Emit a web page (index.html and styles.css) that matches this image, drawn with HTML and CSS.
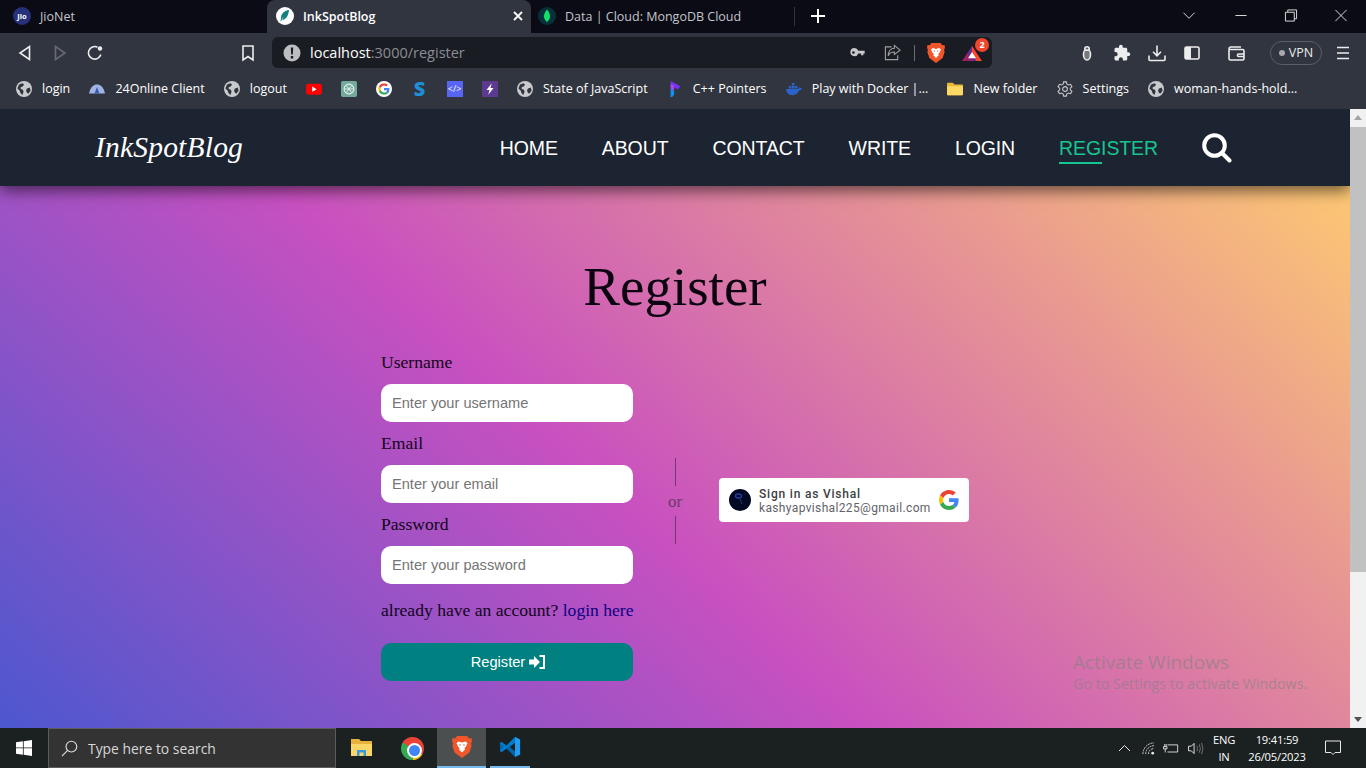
FILE: index.html
```html
<!DOCTYPE html>
<html>
<head>
    <title>InkSpotBlog</title>
    <link rel="stylesheet" href="styles.css">
</head>
<body>
    <svg class="defs">
        <symbol id="globe" viewBox="0 0 16 16">
            <circle cx="8" cy="8" r="8" fill="#c9cacd"/>
            <path fill="#31353f" d="M3 3.500 6.500 2.200 8 3.500 6.800 5.600 4.800 6 4.600 8 6.600 8.600 7.600 10.500 6.400 14 4.600 12.200 3.600 9.600 1.400 7.600ZM11 7.600 13.800 6.600 14.600 9.600 12.600 12.600 11 12 10 9.600Z"/>
        </symbol>
        <symbol id="google-g" viewBox="0 0 48 48">
            <path fill="#EA4335" d="M24 9.5c3.54 0 6.71 1.22 9.21 3.6l6.85-6.85C35.9 2.38 30.47 0 24 0 14.62 0 6.51 5.38 2.56 13.22l7.98 6.19C12.43 13.72 17.74 9.5 24 9.5z"/>
            <path fill="#4285F4" d="M46.98 24.55c0-1.57-.15-3.09-.38-4.55H24v9.02h12.94c-.58 2.96-2.26 5.48-4.78 7.18l7.73 6c4.51-4.18 7.09-10.36 7.09-17.65z"/>
            <path fill="#FBBC05" d="M10.53 28.59c-.48-1.45-.76-2.99-.76-4.59s.27-3.14.76-4.59l-7.98-6.19C.92 16.46 0 20.12 0 24c0 3.88.92 7.54 2.56 10.78l7.97-6.19z"/>
            <path fill="#34A853" d="M24 48c6.48 0 11.93-2.13 15.89-5.81l-7.73-6c-2.15 1.45-4.92 2.3-8.16 2.3-6.26 0-11.57-4.22-13.47-9.91l-7.98 6.19C6.51 42.62 14.62 48 24 48z"/>
        </symbol>
        <symbol id="brave" viewBox="0 0 20 22">
            <path fill="#f1562b" d="M5 0h10l2 2.400 2.400-.4.6 3-1 2.600.6 2.400-2.200 6.600L10 22l-7.400-5.400L.4 10 1 7.600 0 5l.6-3L3 2.400Z"/>
            <path fill="#fff" d="M6.500 5.500 10 6.500l3.500-1 2 1.500-1.500 3.500-1.500 1.500.5 1.500L10 16.500 7 13.500l.5-1.500L6 10.500 4.500 7Z"/>
            <path fill="#f1562b" d="M7 8.500h2.200L8 10ZM13 8.500h-2.200L12 10Z"/>
        </symbol>
    </svg>

    <div class="tab-strip">
        <div class="tab tab-first">
            <span class="fav-jio">Jio</span>
            <span class="tab-title">JioNet</span>
        </div>
        <div class="tab tab-active">
            <svg class="fav" viewBox="0 0 18 18">
                <circle cx="9" cy="9" r="9" fill="#fff"/>
                <path fill="#12807f" d="M13 3C8 3.500 5 7 5 11l-.5 3.500 1-.8C6 12 6.500 11 7.500 9.500 7 11 6.500 12 6.300 13 10 12.500 12.500 8.500 13 3Z"/>
            </svg>
            <span class="tab-title">InkSpotBlog</span>
            <svg class="tab-close" viewBox="0 0 10 10"><path d="M1 1 9 9M9 1 1 9"/></svg>
        </div>
        <div class="tab tab-last">
            <svg class="fav" viewBox="0 0 18 18">
                <circle cx="9" cy="9" r="9" fill="#06303a"/>
                <path fill="#13e069" d="M9 2.500C11.500 5.500 12 7.500 12 9.500 12 12 10.500 13.500 9.300 14.500L9 16 8.700 14.500C7.500 13.500 6 12 6 9.500 6 7.500 6.500 5.500 9 2.500Z"/>
            </svg>
            <span class="tab-title">Data | Cloud: MongoDB Cloud</span>
        </div>
        <svg class="new-tab" viewBox="0 0 14 14"><path d="M7 0V14M0 7H14"/></svg>
        <div class="window-controls">
            <svg viewBox="0 0 14 14"><path d="M1 4 7 10 13 4"/></svg>
            <svg viewBox="0 0 14 14"><path d="M1 7H13"/></svg>
            <svg viewBox="0 0 14 14"><path d="M3.500 3V1H13V10.500H10.500M1 3.500H10.500V13H1Z"/></svg>
            <svg viewBox="0 0 14 14"><path d="M1 1 13 13M13 1 1 13"/></svg>
        </div>
    </div>

    <div class="toolbar">
        <div class="tool-btn">
            <svg viewBox="0 0 18 18"><path d="M13.500 2.500V15.500L4 9Z"/></svg>
        </div>
        <div class="tool-btn tool-off">
            <svg viewBox="0 0 18 18"><path d="M4.500 2.500V15.500L14 9Z"/></svg>
        </div>
        <div class="tool-btn">
            <svg viewBox="0 0 18 18"><path d="M14.800 10.500A6.300 6.300 0 1 1 11.500 3.200"/><circle class="solid" cx="14" cy="4.500" r="2.200"/></svg>
        </div>
        <div class="tool-btn bookmark-btn">
            <svg viewBox="0 0 18 18"><path d="M4 2H14V16L9 12.500 4 16Z"/></svg>
        </div>
        <div class="url-pill">
            <svg class="url-info" viewBox="0 0 18 18">
                <circle cx="9" cy="9" r="8.500" fill="#bdbec2"/>
                <path fill="#1a1c23" d="M7.800 3.500h2.400L9.800 10.500H8.200ZM7.800 12h2.400v2.400H7.800Z"/>
            </svg>
            <span class="url-text">localhost<span class="url-dim">:3000/register</span></span>
            <div class="url-icons">
                <svg class="key-icon" viewBox="0 0 16 10">
                    <path fill="#c8c9cc" fill-rule="evenodd" d="M4.500 0A4.500 4.500 0 0 1 8.800 3H16V6H14.500V8H12V6H8.800A4.500 4.500 0 1 1 4.500 0ZM3.500 3.500A1.500 1.500 0 1 0 3.500 6.500 1.500 1.500 0 0 0 3.500 3.500Z"/>
                </svg>
                <svg class="share-icon" viewBox="0 0 18 18">
                    <path d="M8 3H1.500V16.500H14.500V12M11 1.500 17 6.500 11 11V8.500C7.500 8.500 5.500 10 4.500 12.500 4.500 8 7 4.500 11 4.500Z"/>
                </svg>
                <span class="url-sep"></span>
                <svg class="brave-icon"><use href="#brave"/></svg>
                <div class="bat-wrap">
                    <svg class="bat-icon" viewBox="0 0 22 18">
                        <path fill="#662d91" d="M11 1 22 18H0Z"/>
                        <path fill="#ff4724" d="M11 1 22 18H16L11 9Z"/>
                        <path fill="#9e1f63" d="M0 18 6 9 11 18Z"/>
                        <path fill="#fff" d="M11 8 15.500 15H6.500Z"/>
                    </svg>
                    <span class="bat-badge">2</span>
                </div>
            </div>
        </div>
        <div class="tool-btn bug-btn">
            <svg viewBox="0 0 18 18">
                <ellipse cx="9" cy="10.500" rx="3.500" ry="5.500" fill="#77787c"/>
                <ellipse cx="9" cy="4.500" rx="2.200" ry="1.800" fill="#5d5e63"/>
            </svg>
        </div>
        <div class="tool-btn">
            <svg class="fill-icon" viewBox="0 0 24 24"><path d="M20.500 11H19V7c0-1.100-.9-2-2-2h-4V3.500C13 2.120 11.880 1 10.500 1S8 2.120 8 3.500V5H4c-1.100 0-1.990.9-1.990 2v3.800H3.500c1.490 0 2.700 1.210 2.700 2.700s-1.210 2.700-2.700 2.700H2V20c0 1.100.9 2 2 2h3.800v-1.500c0-1.490 1.210-2.700 2.700-2.700 1.490 0 2.700 1.210 2.700 2.700V22H17c1.100 0 2-.9 2-2v-4h1.500c1.380 0 2.500-1.120 2.500-2.500S21.880 11 20.500 11z"/></svg>
        </div>
        <div class="tool-btn">
            <svg viewBox="0 0 18 18"><path d="M9 1.500V11.500M5 7.800 9 11.800 13 7.800M1 11.500V15.500Q1 16.500 2 16.500H16Q17 16.500 17 15.500V11.500"/></svg>
        </div>
        <div class="tool-btn">
            <svg viewBox="0 0 18 18"><rect x="2" y="3" width="14" height="12" rx="1.500"/><rect class="solid" x="2" y="3" width="6" height="12"/></svg>
        </div>
        <div class="tool-btn wallet-btn">
            <svg viewBox="0 0 18 18"><path d="M2 5.500V14.500Q2 16 3.500 16H15.500Q17 16 17 14.500V7Q17 5.500 15.500 5.500H3.500Q2 5.500 2 4.500T3.500 3H14M11.500 10H17V12.500H11.500Q10.500 12.500 10.500 11.200T11.500 10Z"/></svg>
        </div>
        <div class="vpn-pill"><span class="vpn-dot"></span>VPN</div>
        <div class="tool-btn">
            <svg viewBox="0 0 18 18"><path d="M3 3.500H15M3 9H15M3 14.500H15"/></svg>
        </div>
    </div>

    <div class="bookmarks">
        <div class="bm"><svg class="bm-icon"><use href="#globe"/></svg><span>login</span></div>
        <div class="bm">
            <svg class="bm-icon" viewBox="0 0 16 16">
                <path fill="#9fb4e4" d="M0 12.500C1.500 6 4.500 3.500 8 3.500S14.500 6 16 12.500Z"/>
                <path fill="#3c5aa6" d="M8 6 10.500 12.500H5.500Z"/>
            </svg>
            <span>24Online Client</span>
        </div>
        <div class="bm"><svg class="bm-icon"><use href="#globe"/></svg><span>logout</span></div>
        <div class="bm">
            <svg class="bm-icon" viewBox="0 0 18 18">
                <rect y="3" width="18" height="12.500" rx="3" fill="#f00"/>
                <path fill="#fff" d="M7 6.200 12 9.200 7 12.200Z"/>
            </svg>
        </div>
        <div class="bm">
            <svg class="bm-icon" viewBox="0 0 18 18">
                <rect width="18" height="18" rx="2" fill="#74aa9c"/>
                <circle cx="9" cy="9" r="5.500" fill="none" stroke="#e6f1ee" stroke-width="1.200"/>
                <path fill="none" stroke="#e6f1ee" d="M6 5 12 13M12 5 6 13M3.500 9H14.500"/>
            </svg>
        </div>
        <div class="bm"><svg class="bm-icon" viewBox="0 0 18 18"><circle cx="9" cy="9" r="9" fill="#fff"/><use href="#google-g" x="2.500" y="2.500" width="13" height="13"/></svg></div>
        <div class="bm"><span class="bm-s">S</span></div>
        <div class="bm"><span class="bm-code">&lt;/&gt;</span></div>
        <div class="bm">
            <svg class="bm-icon" viewBox="0 0 18 18">
                <rect width="18" height="18" fill="#5b3a8f"/>
                <path fill="#fff" d="M11 2.500 5 10H8.500L7 15.500 13 8H9.500Z"/>
            </svg>
        </div>
        <div class="bm"><svg class="bm-icon"><use href="#globe"/></svg><span>State of JavaScript</span></div>
        <div class="bm">
            <svg class="bm-icon" viewBox="0 0 18 18">
                <path fill="#7b2ff7" d="M4 0 15 6 12 9.500 8 7V5L4 3Z"/>
                <path fill="#a24bf5" d="M4 3 8 5V11L4 9Z"/>
                <path fill="#1390f0" d="M4 9 8 11V15L6 18H4Z"/>
            </svg>
            <span>C++ Pointers</span>
        </div>
        <div class="bm">
            <svg class="bm-icon" viewBox="0 0 18 14">
                <path fill="#2b63c9" d="M0 7H14C14.500 5.500 15 5 15.500 5 16.500 5.500 17 6 18 6.500 17 8 16 8.500 15 8.500 13.500 12 10.500 14 7 14 3 14 .5 11.500 0 7Z"/>
                <path fill="#2b63c9" d="M3 3.500H6V6.300H3ZM6.500 3.500H9.500V6.300H6.500ZM10 3.500H13V6.300H10ZM6.500 .3H9.500V3H6.500Z"/>
            </svg>
            <span>Play with Docker |...</span>
        </div>
        <div class="bm">
            <svg class="bm-icon" viewBox="0 0 18 16">
                <path fill="#e9b53a" d="M0 2Q0 1 1 1H6.500L8.500 3H17Q18 3 18 4V14Q18 15 17 15H1Q0 15 0 14Z"/>
                <path fill="#fbd964" d="M0 5H18V14Q18 15 17 15H1Q0 15 0 14Z"/>
            </svg>
            <span>New folder</span>
        </div>
        <div class="bm">
            <svg class="bm-icon" viewBox="0 0 18 18" fill="none" stroke="#c9cacd" stroke-width="1.200">
                <path d="M7.500 1H10.500L11 3.300 13 4.400 15.200 3.700 16.800 6.300 15 8V10L16.800 11.700 15.200 14.300 13 13.600 11 14.700 10.500 17H7.500L7 14.700 5 13.600 2.800 14.300 1.200 11.700 3 10V8L1.200 6.300 2.800 3.700 5 4.400 7 3.300Z"/>
                <circle cx="9" cy="9" r="2.700"/>
            </svg>
            <span>Settings</span>
        </div>
        <div class="bm"><svg class="bm-icon"><use href="#globe"/></svg><span>woman-hands-hold...</span></div>
    </div>

    <div class="viewport">
        <div class="page">
            <nav class="navbar">
                <a class="logo">InkSpotBlog</a>
                <div class="nav-links">
                    <a class="nav-link">HOME</a>
                    <a class="nav-link">ABOUT</a>
                    <a class="nav-link">CONTACT</a>
                    <a class="nav-link">WRITE</a>
                    <a class="nav-link">LOGIN</a>
                    <a class="nav-link active">REGISTER</a>
                    <svg class="nav-search" viewBox="0 0 30 30">
                        <circle cx="12.500" cy="12.500" r="10.300"/>
                        <path d="M20 20 27.500 27.500"/>
                    </svg>
                </div>
            </nav>
            <h1 class="page-title">Register</h1>
            <div class="register-row">
                <form class="register-form">
                    <label class="field-label">Username</label>
                    <input class="field-input" type="text" placeholder="Enter your username">
                    <label class="field-label">Email</label>
                    <input class="field-input" type="text" placeholder="Enter your email">
                    <label class="field-label">Password</label>
                    <input class="field-input" type="password" placeholder="Enter your password">
                    <p class="account-note">already have an account? <a class="account-link">login here</a></p>
                    <button class="register-btn" type="button">
                        Register
                        <svg viewBox="0 0 16 14">
                            <path fill="#fff" d="M0 4.500H5V1L11 7 5 13V9.500H0Z"/>
                            <path fill="none" stroke="#fff" stroke-width="2" d="M10.500 1H15V13H10.500"/>
                        </svg>
                    </button>
                </form>
                <div class="or-divider">
                    <span class="or-line"></span>
                    <span class="or-text">or</span>
                    <span class="or-line"></span>
                </div>
                <div class="google-card">
                    <svg class="google-avatar" viewBox="0 0 22 22">
                        <circle cx="11" cy="11" r="11" fill="#050a24"/>
                        <ellipse cx="9.500" cy="7" rx="3" ry="2" fill="none" stroke="#1c3fa8" stroke-width="1.300"/>
                        <path d="M10.500 8.500 13 15" stroke="#2a3560"/>
                    </svg>
                    <div class="google-text">
                        <div class="google-name">Sign in as Vishal</div>
                        <div class="google-mail">kashyapvishal225@gmail.com</div>
                    </div>
                    <svg class="google-logo"><use href="#google-g"/></svg>
                </div>
            </div>
        </div>
        <div class="activate">
            <div class="activate-title">Activate Windows</div>
            <div class="activate-sub">Go to Settings to activate Windows.</div>
        </div>
        <div class="scrollbar">
            <span class="arrow-up"></span>
            <span class="scroll-thumb"></span>
            <span class="arrow-down"></span>
        </div>
    </div>

    <div class="taskbar">
        <svg class="win-logo" viewBox="0 0 16 16">
            <path fill="#fff" d="M0 2.300 6.900 1.300V7.500H0ZM7.700 1.200 16 0V7.500H7.700ZM0 8.300H6.900V14.700L0 13.700ZM7.700 8.300H16V16L7.700 14.800Z"/>
        </svg>
        <div class="task-search">
            <svg viewBox="0 0 18 18"><circle cx="11" cy="7" r="5.700"/><path d="M7 11 1 17"/></svg>
            <span>Type here to search</span>
        </div>
        <div class="task-app">
            <svg viewBox="0 0 22 20">
                <path fill="#e8b23c" d="M0 1H8L10 3H21V18H0Z"/>
                <path fill="#fcd667" d="M0 6H21V18H0Z"/>
                <path fill="#3a9bdc" d="M6 12H15V18H12.500V14.500H8.500V18H6Z"/>
            </svg>
        </div>
        <div class="task-app">
            <span class="chrome-icon"></span>
        </div>
        <div class="task-app task-active">
            <svg class="task-brave"><use href="#brave"/></svg>
        </div>
        <div class="task-app task-open">
            <svg viewBox="0 0 24 24">
                <path fill="#0065a9" d="M17.500 1 23 3.700V20.300L17.500 23 8 13.500 3 17.500 1 16.300V7.700L3 6.500 8 10.500ZM17.500 7 12 12 17.500 17Z"/>
                <path fill="#1f9cf0" d="M17.500 1 23 3.700V20.300L17.500 23Z"/>
                <path fill="#007acc" d="M1 16.300 3 17.500 17.500 7V1L8 10.500 3 6.500 1 7.700 5 12Z"/>
            </svg>
        </div>
        <div class="tray">
            <svg class="tray-chevron" viewBox="0 0 12 8"><path d="M.5 7 6 1.500 11.500 7"/></svg>
            <svg class="tray-wifi" viewBox="0 0 14 14">
                <path d="M1 13A12 12 0 0 1 13 1M4 13A9 9 0 0 1 13 4M7 13A6 6 0 0 1 13 7" stroke-dasharray="2 1"/>
                <circle class="tray-solid" cx="11.500" cy="12" r="1.500"/>
            </svg>
            <svg class="tray-battery" viewBox="0 0 18 12"><path d="M5 2.500H16.500V10.500H5M.5 4.500H4.500V7H.5ZM2 1.500V4.500M3.500 1.500V4.500M2.500 7V11"/></svg>
            <svg class="tray-volume" viewBox="0 0 17 14">
                <path d="M1 4.500H4L7 1.500V12.500L4 9.500H1Z"/>
                <path class="tray-dim" d="M10 4Q11.500 7 10 10M12.500 2.500Q15 7 12.500 11.500M15 1Q18 7 15 13"/>
            </svg>
            <div class="tray-lang"><div>ENG</div><div>IN</div></div>
            <div class="tray-clock"><div>19:41:59</div><div>26/05/2023</div></div>
            <svg class="tray-note" viewBox="0 0 16 16"><path d="M.5 1H15.500V12.500H10L8 14.500 6 12.500H.5Z"/></svg>
        </div>
    </div>
</body>
</html>
```

FILE: styles.css
```css
* {
    box-sizing: border-box;
}

html, body {
    margin: 0;
    padding: 0;
    height: 768px;
    overflow: hidden;
}

body {
    display: flex;
    flex-direction: column;
    font-family: 'Open Sans', sans-serif;
    background: #31353f;
}

.defs {
    display: none;
}

svg {
    display: block;
    flex-shrink: 0;
}

/* tab strip */
.tab-strip {
    display: flex;
    align-items: stretch;
    height: 33px;
    background: #0a0b14;
    color: #c4c6cc;
    font-size: 12.5px;
}

.tab {
    display: flex;
    align-items: center;
    padding-bottom: 1px;
}

.tab-first {
    width: 267px;
    padding-left: 13px;
}

.tab-active {
    width: 264px;
    padding-left: 9px;
    background: #31353f;
    border-radius: 8px 8px 0 0;
    color: #fff;
    font-weight: 600;
}

.tab-last {
    position: relative;
    width: 264px;
    padding-left: 7px;
}

.tab-last::after {
    content: "";
    position: absolute;
    right: 0;
    top: 7px;
    height: 19px;
    width: 1px;
    background: #33353e;
}

.fav, .fav-jio {
    width: 18px;
    height: 18px;
    margin-right: 9px;
}

.fav-jio {
    display: flex;
    align-items: center;
    justify-content: center;
    border-radius: 50%;
    background: #27317a;
    color: #fff;
    font-size: 7.5px;
    font-weight: 700;
}

.tab-close {
    width: 10px;
    height: 10px;
    margin-left: auto;
    margin-right: 8px;
    fill: none;
    stroke: #fff;
    stroke-width: 1.8;
}

.new-tab {
    width: 14px;
    height: 14px;
    margin: 9px 0 0 16px;
    fill: none;
    stroke: #fff;
    stroke-width: 2;
}

.window-controls {
    display: flex;
    align-items: center;
    margin-left: auto;
    padding-bottom: 2px;
}

.window-controls svg {
    width: 50px;
    height: 13px;
    fill: none;
    stroke: #e6e6e6;
    stroke-width: 1;
}

.window-controls svg:first-child {
    margin-right: 2px;
}

/* toolbar */
.toolbar {
    display: flex;
    align-items: center;
    height: 37px;
    padding: 2px 0 0 7px;
    background: #31353f;
}

.tool-btn {
    display: flex;
    align-items: center;
    justify-content: center;
    width: 35px;
    height: 30px;
}

.tool-btn svg {
    width: 18px;
    height: 18px;
    fill: none;
    stroke: #eceded;
    stroke-width: 1.6;
}

.tool-btn .solid {
    fill: #eceded;
    stroke: none;
}

.tool-btn .fill-icon {
    fill: #eceded;
    stroke: none;
}

.tool-off svg {
    stroke: #686b75;
}

.bookmark-btn {
    margin-left: 118px;
}

.url-pill {
    display: flex;
    align-items: center;
    width: 720px;
    height: 31px;
    margin-left: 7px;
    padding: 0 11px;
    background: #1a1c23;
    border-radius: 6px;
}

.url-info {
    width: 18px;
    height: 18px;
    margin-right: 9px;
}

.url-text {
    color: #fff;
    font-size: 14.5px;
}

.url-dim {
    color: #8b8d93;
}

.url-icons {
    display: flex;
    align-items: center;
    margin-left: auto;
}

.key-icon {
    width: 15px;
    height: 9px;
}

.share-icon {
    width: 17px;
    height: 17px;
    margin-left: 19px;
    fill: none;
    stroke: #9c9ea3;
    stroke-width: 1.2;
}

.url-sep {
    width: 1px;
    height: 16px;
    margin: 0 12px 0 13px;
    background: #6a6c72;
}

.brave-icon {
    width: 18px;
    height: 20px;
}

.bat-wrap {
    position: relative;
    margin-left: 17px;
    margin-right: -1px;
}

.bat-icon {
    width: 20px;
    height: 16px;
}

.bat-badge {
    position: absolute;
    top: -7px;
    right: -7px;
    width: 14px;
    height: 14px;
    border-radius: 50%;
    background: #f0462b;
    color: #fff;
    font-size: 9px;
    font-weight: 700;
    line-height: 14px;
    text-align: center;
}

.bug-btn {
    margin-left: 77px;
}

.wallet-btn {
    margin-left: 9px;
}

.vpn-pill {
    display: flex;
    align-items: center;
    justify-content: center;
    gap: 4px;
    width: 52px;
    height: 24px;
    margin-left: 17px;
    margin-right: 3px;
    border: 1px solid #5a5e6a;
    border-radius: 12px;
    color: #eceded;
    font-size: 12.5px;
}

.vpn-dot {
    width: 6px;
    height: 6px;
    border-radius: 50%;
    background: #a6a8ae;
}

/* bookmarks bar */
.bookmarks {
    display: flex;
    align-items: center;
    gap: 19.15px;
    height: 39px;
    padding: 0 0 2px 16px;
    background: #31353f;
    color: #fff;
    font-size: 12.5px;
    white-space: nowrap;
}

.bm {
    display: flex;
    align-items: center;
    gap: 10px;
}

.bm-icon {
    width: 16px;
    height: 16px;
}

.bm-s {
    width: 16px;
    color: #1c8fd6;
    font-size: 20px;
    font-weight: 800;
    line-height: 17px;
    text-align: center;
}

.bm-code {
    width: 16px;
    height: 16px;
    background: #5865f2;
    color: #fff;
    font-size: 9px;
    line-height: 16px;
    text-align: center;
}

/* page area */
.viewport {
    position: relative;
    display: flex;
    height: 619px;
    overflow: hidden;
}

.page {
    width: 1350px;
    height: 811px;
    background-image: linear-gradient(43deg, #4158D0 0%, #C850C0 46%, #FFCC70 100%);
    background-size: 1350px 655px;
    background-position: 0 40px;
}

.navbar {
    display: flex;
    align-items: center;
    justify-content: space-between;
    height: 77px;
    padding: 0 118px 0 95px;
    background: #1c2331;
    box-shadow: 0 5px 14px rgba(0, 0, 0, 0.55);
}

.logo {
    color: #fff;
    font-family: 'Liberation Serif', serif;
    font-size: 29.5px;
    font-style: italic;
    letter-spacing: 0.2px;
}

.nav-links {
    display: flex;
    align-items: center;
    gap: 44px;
}

.nav-link {
    position: relative;
    padding-top: 2px;
    color: #fff;
    font-family: 'Liberation Sans', sans-serif;
    font-size: 19.5px;
    letter-spacing: -0.1px;
}

.nav-link.active {
    color: #16c592;
}

.nav-link.active::after {
    content: "";
    position: absolute;
    left: 0;
    bottom: -4px;
    width: 43px;
    height: 2px;
    background: #16c592;
}

.nav-search {
    width: 30px;
    height: 30px;
    fill: none;
    stroke: #fff;
    stroke-width: 4;
    stroke-linecap: round;
}

.page-title {
    margin: 69px 0 22px;
    color: #0b0410;
    font-family: 'Liberation Serif', serif;
    font-size: 55px;
    font-weight: 400;
    line-height: 64px;
    text-align: center;
}

.register-row {
    display: flex;
    justify-content: center;
    align-items: flex-start;
}

.register-form {
    width: 252px;
    font-family: 'Liberation Serif', serif;
}

.field-label {
    display: block;
    margin: 11px 0 11px;
    color: #12041a;
    font-size: 17.6px;
    line-height: 21px;
}

.field-input {
    display: block;
    width: 100%;
    height: 38px;
    padding: 0 11px;
    border: none;
    border-radius: 10px;
    background: #fff;
    font-family: 'Liberation Sans', sans-serif;
    font-size: 14.6px;
}

.field-input::placeholder {
    color: #757575;
    opacity: 1;
}

.account-note {
    margin: 16px 0 22px;
    color: #12041a;
    font-size: 17.6px;
    line-height: 21px;
    white-space: nowrap;
}

.account-link {
    color: #0b0080;
}

.register-btn {
    display: flex;
    align-items: center;
    justify-content: center;
    gap: 4px;
    width: 100%;
    height: 38px;
    padding: 0 0 0 2px;
    border: none;
    border-radius: 10px;
    background: #008080;
    color: #fff;
    font-family: 'Liberation Sans', sans-serif;
    font-size: 14.6px;
}

.register-btn svg {
    width: 16px;
    height: 14px;
}

.or-divider {
    display: flex;
    flex-direction: column;
    align-items: center;
    width: 84px;
    margin-top: 117px;
    margin-right: 2px;
}

.or-line {
    width: 1px;
    height: 28px;
    background: #6e3a70;
}

.or-text {
    height: 30px;
    padding-top: 7px;
    color: #6a3a6c;
    font-family: 'Liberation Serif', serif;
    font-size: 17px;
    line-height: 18px;
}

.google-card {
    display: flex;
    align-items: center;
    width: 250px;
    height: 44px;
    margin-top: 137px;
    padding: 0 10px;
    border-radius: 4px;
    background: #fff;
    font-family: Roboto, sans-serif;
}

.google-avatar {
    width: 22px;
    height: 22px;
    margin-right: 8px;
}

.google-text {
    flex: 1;
    padding-top: 2px;
    font-size: 12px;
    line-height: 14px;
    white-space: nowrap;
}

.google-name {
    color: #3c4043;
    font-weight: 500;
    letter-spacing: 0.8px;
}

.google-mail {
    color: #5f6368;
    letter-spacing: 0.35px;
}

.google-logo {
    width: 20px;
    height: 20px;
}

.activate {
    position: absolute;
    left: 1073px;
    top: 540px;
    color: rgba(130, 130, 130, 0.6);
    font-family: 'Open Sans', sans-serif;
}

.activate-title {
    font-size: 19px;
    line-height: 26px;
}

.activate-sub {
    font-size: 14.3px;
    line-height: 18px;
}

.scrollbar {
    position: relative;
    width: 16px;
    height: 619px;
    background: #f1f1f1;
}

.scroll-thumb {
    position: absolute;
    left: 0;
    top: 18px;
    width: 16px;
    height: 445px;
    background: #c1c1c1;
}

.arrow-up, .arrow-down {
    position: absolute;
    left: 4px;
    width: 0;
    height: 0;
    border-left: 4px solid transparent;
    border-right: 4px solid transparent;
}

.arrow-up {
    top: 6px;
    border-bottom: 5px solid #a3a3a3;
}

.arrow-down {
    bottom: 6px;
    border-top: 5px solid #505050;
}

/* windows taskbar */
.taskbar {
    display: flex;
    align-items: center;
    height: 40px;
    background: #1b2020;
    color: #fff;
    font-family: 'Open Sans', sans-serif;
}

.win-logo {
    width: 16px;
    height: 16px;
    margin: 0 16px;
}

.task-search {
    display: flex;
    align-items: center;
    width: 288px;
    height: 40px;
    padding-left: 12px;
    background: #333;
    border: 1px solid #5c5c5c;
    color: #d8d8d8;
    font-size: 13.9px;
}

.task-search svg {
    width: 17px;
    height: 17px;
    margin-right: 10px;
    fill: none;
    stroke: #ddd;
    stroke-width: 1.2;
}

.task-app {
    display: flex;
    align-items: center;
    justify-content: center;
    width: 50px;
    height: 40px;
}

.task-app svg {
    width: 22px;
    height: 22px;
}

.task-search + .task-app {
    margin-left: 1px;
}

.task-active {
    width: 49px;
    background: #4b4f4f;
    border-bottom: 2px solid #76b9ed;
}

.task-open {
    width: 40px;
    margin-left: 4px;
    border-bottom: 2px solid #76b9ed;
}

.task-active .task-brave {
    width: 20px;
    height: 22px;
}

.chrome-icon {
    position: relative;
    display: block;
    width: 23px;
    height: 23px;
    border-radius: 50%;
    background: conic-gradient(#ea4335 0 120deg, #fbbc05 120deg 180deg, #34a853 180deg 300deg, #ea4335 300deg);
}

.chrome-icon::after {
    content: "";
    position: absolute;
    left: 6px;
    top: 6px;
    width: 11px;
    height: 11px;
    border: 2px solid #fff;
    border-radius: 50%;
    background: #4285f4;
}

.tray {
    display: flex;
    align-items: center;
    margin-left: auto;
    height: 40px;
    padding-right: 25px;
    font-size: 11.2px;
    letter-spacing: -0.2px;
}

.tray svg {
    fill: none;
    stroke: #e8e8e8;
    stroke-width: 1;
}

.tray-chevron {
    width: 13px;
    height: 8px;
}

.tray-wifi {
    width: 13px;
    height: 13px;
    margin-left: 11px;
}

.tray-solid {
    fill: #e8e8e8;
    stroke: none;
}

.tray-battery {
    width: 16px;
    height: 12px;
    margin-left: 8px;
}

.tray-volume {
    width: 17px;
    height: 13px;
    margin-left: 8px;
}

.tray-dim {
    stroke: #777;
}

.tray-lang {
    width: 30px;
    margin-left: 5px;
    line-height: 17px;
    text-align: center;
}

.tray-clock {
    width: 76px;
    line-height: 17px;
    text-align: center;
}

.tray-note {
    width: 16px;
    height: 16px;
    margin-left: 10px;
}
```
